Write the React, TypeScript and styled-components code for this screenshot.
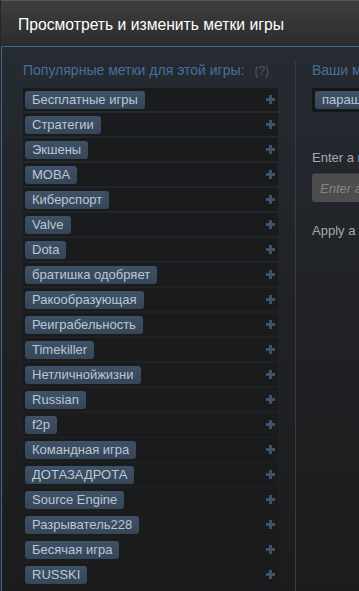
import styled, { createGlobalStyle } from "styled-components";

const popularTags = [
  "Бесплатные игры",
  "Стратегии",
  "Экшены",
  "MOBA",
  "Киберспорт",
  "Valve",
  "Dota",
  "братишка одобряет",
  "Ракообразующая",
  "Реиграбельность",
  "Timekiller",
  "Нетличнойжизни",
  "Russian",
  "f2p",
  "Командная игра",
  "ДОТАЗАДРОТА",
  "Source Engine",
  "Разрыватель228",
  "Бесячая игра",
  "RUSSKI",
];

const GlobalStyle = createGlobalStyle`
  html, body {
    margin: 0;
    padding: 0;
    background: #1c1c1c;
  }
  body {
    font-family: "Liberation Sans", Arial, sans-serif;
  }
`;

const Viewport = styled.div`
  width: 359px;
  height: 591px;
  overflow: hidden;
`;

const Modal = styled.div`
  width: 640px;
  height: 591px;
  display: flex;
  flex-direction: column;
  border-left: 1px solid #262626;
`;

const Header = styled.div`
  height: 46px;
  flex-shrink: 0;
  display: flex;
  align-items: center;
  padding: 2px 0 0 17px;
  box-sizing: border-box;
  border-top: 1px solid #575757;
  background: linear-gradient(to bottom, #3e3e3e, #2c2c2c);
  color: #ffffff;
  font-size: 15.7px;
`;

const Body = styled.div`
  flex: 1;
  display: grid;
  grid-template-columns: 272px 1fr;
  padding: 14px 0 0 21px;
  border-top: 1px solid #46678c;
  border-left: 1px solid #46678c;
  background: linear-gradient(to bottom, #262b33 0%, #202226 45%, #1c1c1c 100%);
`;

const LeftColumn = styled.div`
  padding-right: 17px;
`;

const RightColumn = styled.div`
  border-left: 1px solid #383b40;
  padding-left: 16px;
`;

const SectionTitle = styled.div`
  height: 18px;
  line-height: 18px;
  margin-bottom: 9px;
  font-size: 14px;
  color: #4a6f96;
  white-space: nowrap;
`;

const Hint = styled.span`
  margin-left: 10px;
  font-size: 12px;
  color: #55595e;
`;

const TagRow = styled.div`
  height: 23px;
  margin-bottom: 2px;
  display: flex;
  align-items: center;
  justify-content: space-between;
  padding: 0 3px 0 2px;
  background: #1a1b1d;
`;

const Tag = styled.span`
  height: 18px;
  line-height: 18px;
  padding: 0 7px;
  border-radius: 3px;
  background: linear-gradient(to bottom, #3e5166, #364658);
  color: #b9c7d4;
  font-size: 13px;
  white-space: nowrap;
`;

const PlusIcon = styled.svg`
  width: 9px;
  height: 9px;
  fill: #3d536d;
`;

const MyTags = styled.div`
  height: 24px;
  display: flex;
  align-items: center;
  padding-left: 3px;
  background: #15171a;
`;

const Prompt = styled.div`
  margin-top: 38px;
  font-size: 13px;
  color: #a9a9a9;
  white-space: nowrap;
`;

const Input = styled.input`
  display: block;
  margin-top: 8px;
  width: 260px;
  height: 29px;
  box-sizing: border-box;
  padding: 0 8px;
  border: none;
  border-top: 1px solid #3a3a3a;
  border-radius: 3px;
  background: #4d4d4d;
  font-family: "Liberation Sans", Arial, sans-serif;
  font-size: 13px;
  color: #ddd;
  &::placeholder {
    color: #858585;
    font-style: italic;
  }
`;

const ApplyNote = styled(Prompt)`
  margin-top: 21px;
`;

const Plus = () => (
  <PlusIcon viewBox="0 0 9 9">
    <rect x="3" y="0" width="3" height="9" />
    <rect x="0" y="3" width="9" height="3" />
  </PlusIcon>
);

export default function App() {
  return (
    <Viewport>
      <GlobalStyle />
      <Modal>
        <Header>Просмотреть и изменить метки игры</Header>
        <Body>
          <LeftColumn>
            <SectionTitle>
              Популярные метки для этой игры:<Hint>(?)</Hint>
            </SectionTitle>
            {popularTags.map((tag) => (
              <TagRow key={tag}>
                <Tag>{tag}</Tag>
                <Plus />
              </TagRow>
            ))}
          </LeftColumn>
          <RightColumn>
            <SectionTitle>Ваши метки для этой игры:</SectionTitle>
            <MyTags>
              <Tag>парашют</Tag>
            </MyTags>
            <Prompt>Enter a new tag that applies to this product:</Prompt>
            <Input placeholder="Enter a tag" />
            <ApplyNote>Apply a tag that you think fits this product</ApplyNote>
          </RightColumn>
        </Body>
      </Modal>
    </Viewport>
  );
}
